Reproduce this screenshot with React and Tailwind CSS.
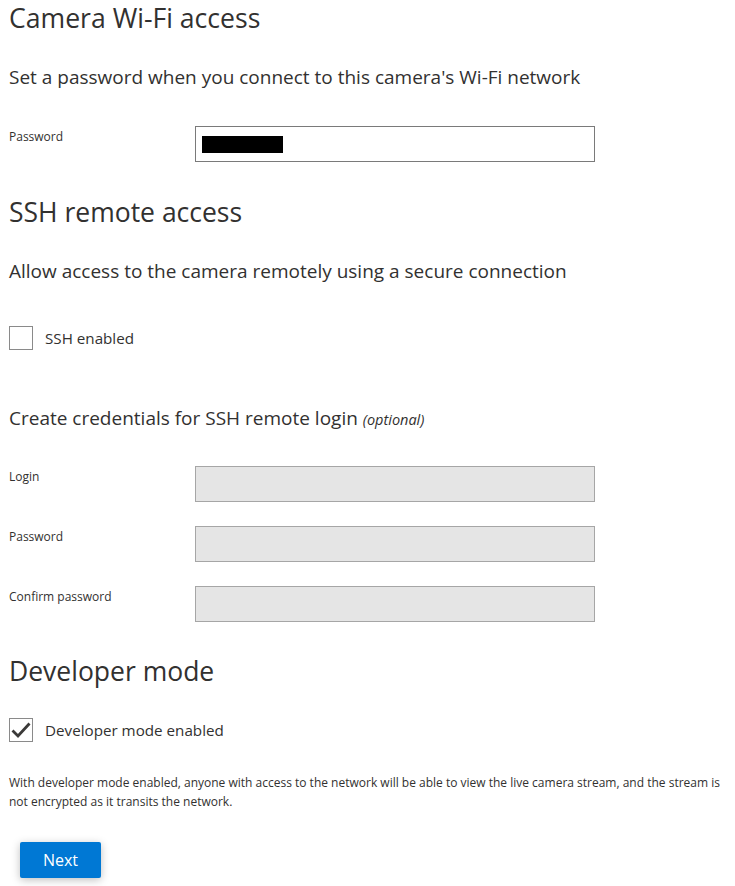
function Field({ label, disabled, filled }) {
    return (
        <div className="flex items-start">
            <label className="w-[186px] shrink-0 pt-[3px] text-[12px] leading-[16px] text-[#323130]">{label}</label>
            <div
                className={
                    disabled
                        ? 'w-[400px] h-[36px] border border-[#a6a6a6] bg-[#e5e5e5]'
                        : 'w-[400px] h-[36px] border border-[#7a7a7a] bg-white flex items-center px-[6px]'
                }
            >
                {filled && <div className="w-[81px] h-[17px] bg-black"></div>}
            </div>
        </div>
    );
}

function Checkbox({ label, checked }) {
    return (
        <div className="flex items-center">
            <div className="w-[24px] h-[24px] border border-[#8a8a8a] bg-white flex items-center justify-center">
                {checked && (
                    <svg width="22" height="22" viewBox="0 0 22 22" fill="none">
                        <path d="M2.5 11.5 L8 17 L19.5 4.5" stroke="#3b3a39" strokeWidth="2.8" />
                    </svg>
                )}
            </div>
            <span className="ml-[12px] text-[15.2px] leading-[22px] text-[#323130]">{label}</span>
        </div>
    );
}

export default function App() {
    return (
        <div className="pl-[9px] pr-[6px] bg-white min-h-[886px] font-['Open_Sans',sans-serif] text-[#323130]">
            <h1 className="text-[26.6px] leading-[36px]">Camera Wi-Fi access</h1>
            <p className="mt-[27px] text-[19px] leading-[28px]">Set a password when you connect to this camera's Wi-Fi network</p>

            <div className="mt-[35px]">
                <Field label="Password" filled />
            </div>

            <h2 className="mt-[32px] text-[26.5px] leading-[36px]">SSH remote access</h2>
            <p className="mt-[27px] text-[19px] leading-[28px]">Allow access to the camera remotely using a secure connection</p>

            <div className="mt-[41px]">
                <Checkbox label="SSH enabled" />
            </div>

            <p className="mt-[54px] text-[19px] leading-[28px]">
                Create credentials for SSH remote login <span className="italic text-[14.5px] leading-[20px]">(optional)</span>
            </p>

            <div className="mt-[34px] flex flex-col gap-[24px]">
                <Field label="Login" disabled />
                <Field label="Password" disabled />
                <Field label="Confirm password" disabled />
            </div>

            <h2 className="mt-[31px] text-[26.5px] leading-[36px]">Developer mode</h2>

            <div className="mt-[29px]">
                <Checkbox label="Developer mode enabled" checked />
            </div>

            <p className="mt-[31px] text-[12px] leading-[19px]">
                With developer mode enabled, anyone with access to the network will be able to view the live camera stream, and the stream is
                <br />
                not encrypted as it transits the network.
            </p>

            <button className="mt-[31px] ml-[11px] w-[81px] h-[36px] rounded-[2px] bg-[#0078d4] text-white text-[16px] shadow-[0_2px_8px_rgba(0,0,0,0.25)]">
                Next
            </button>
        </div>
    );
}
